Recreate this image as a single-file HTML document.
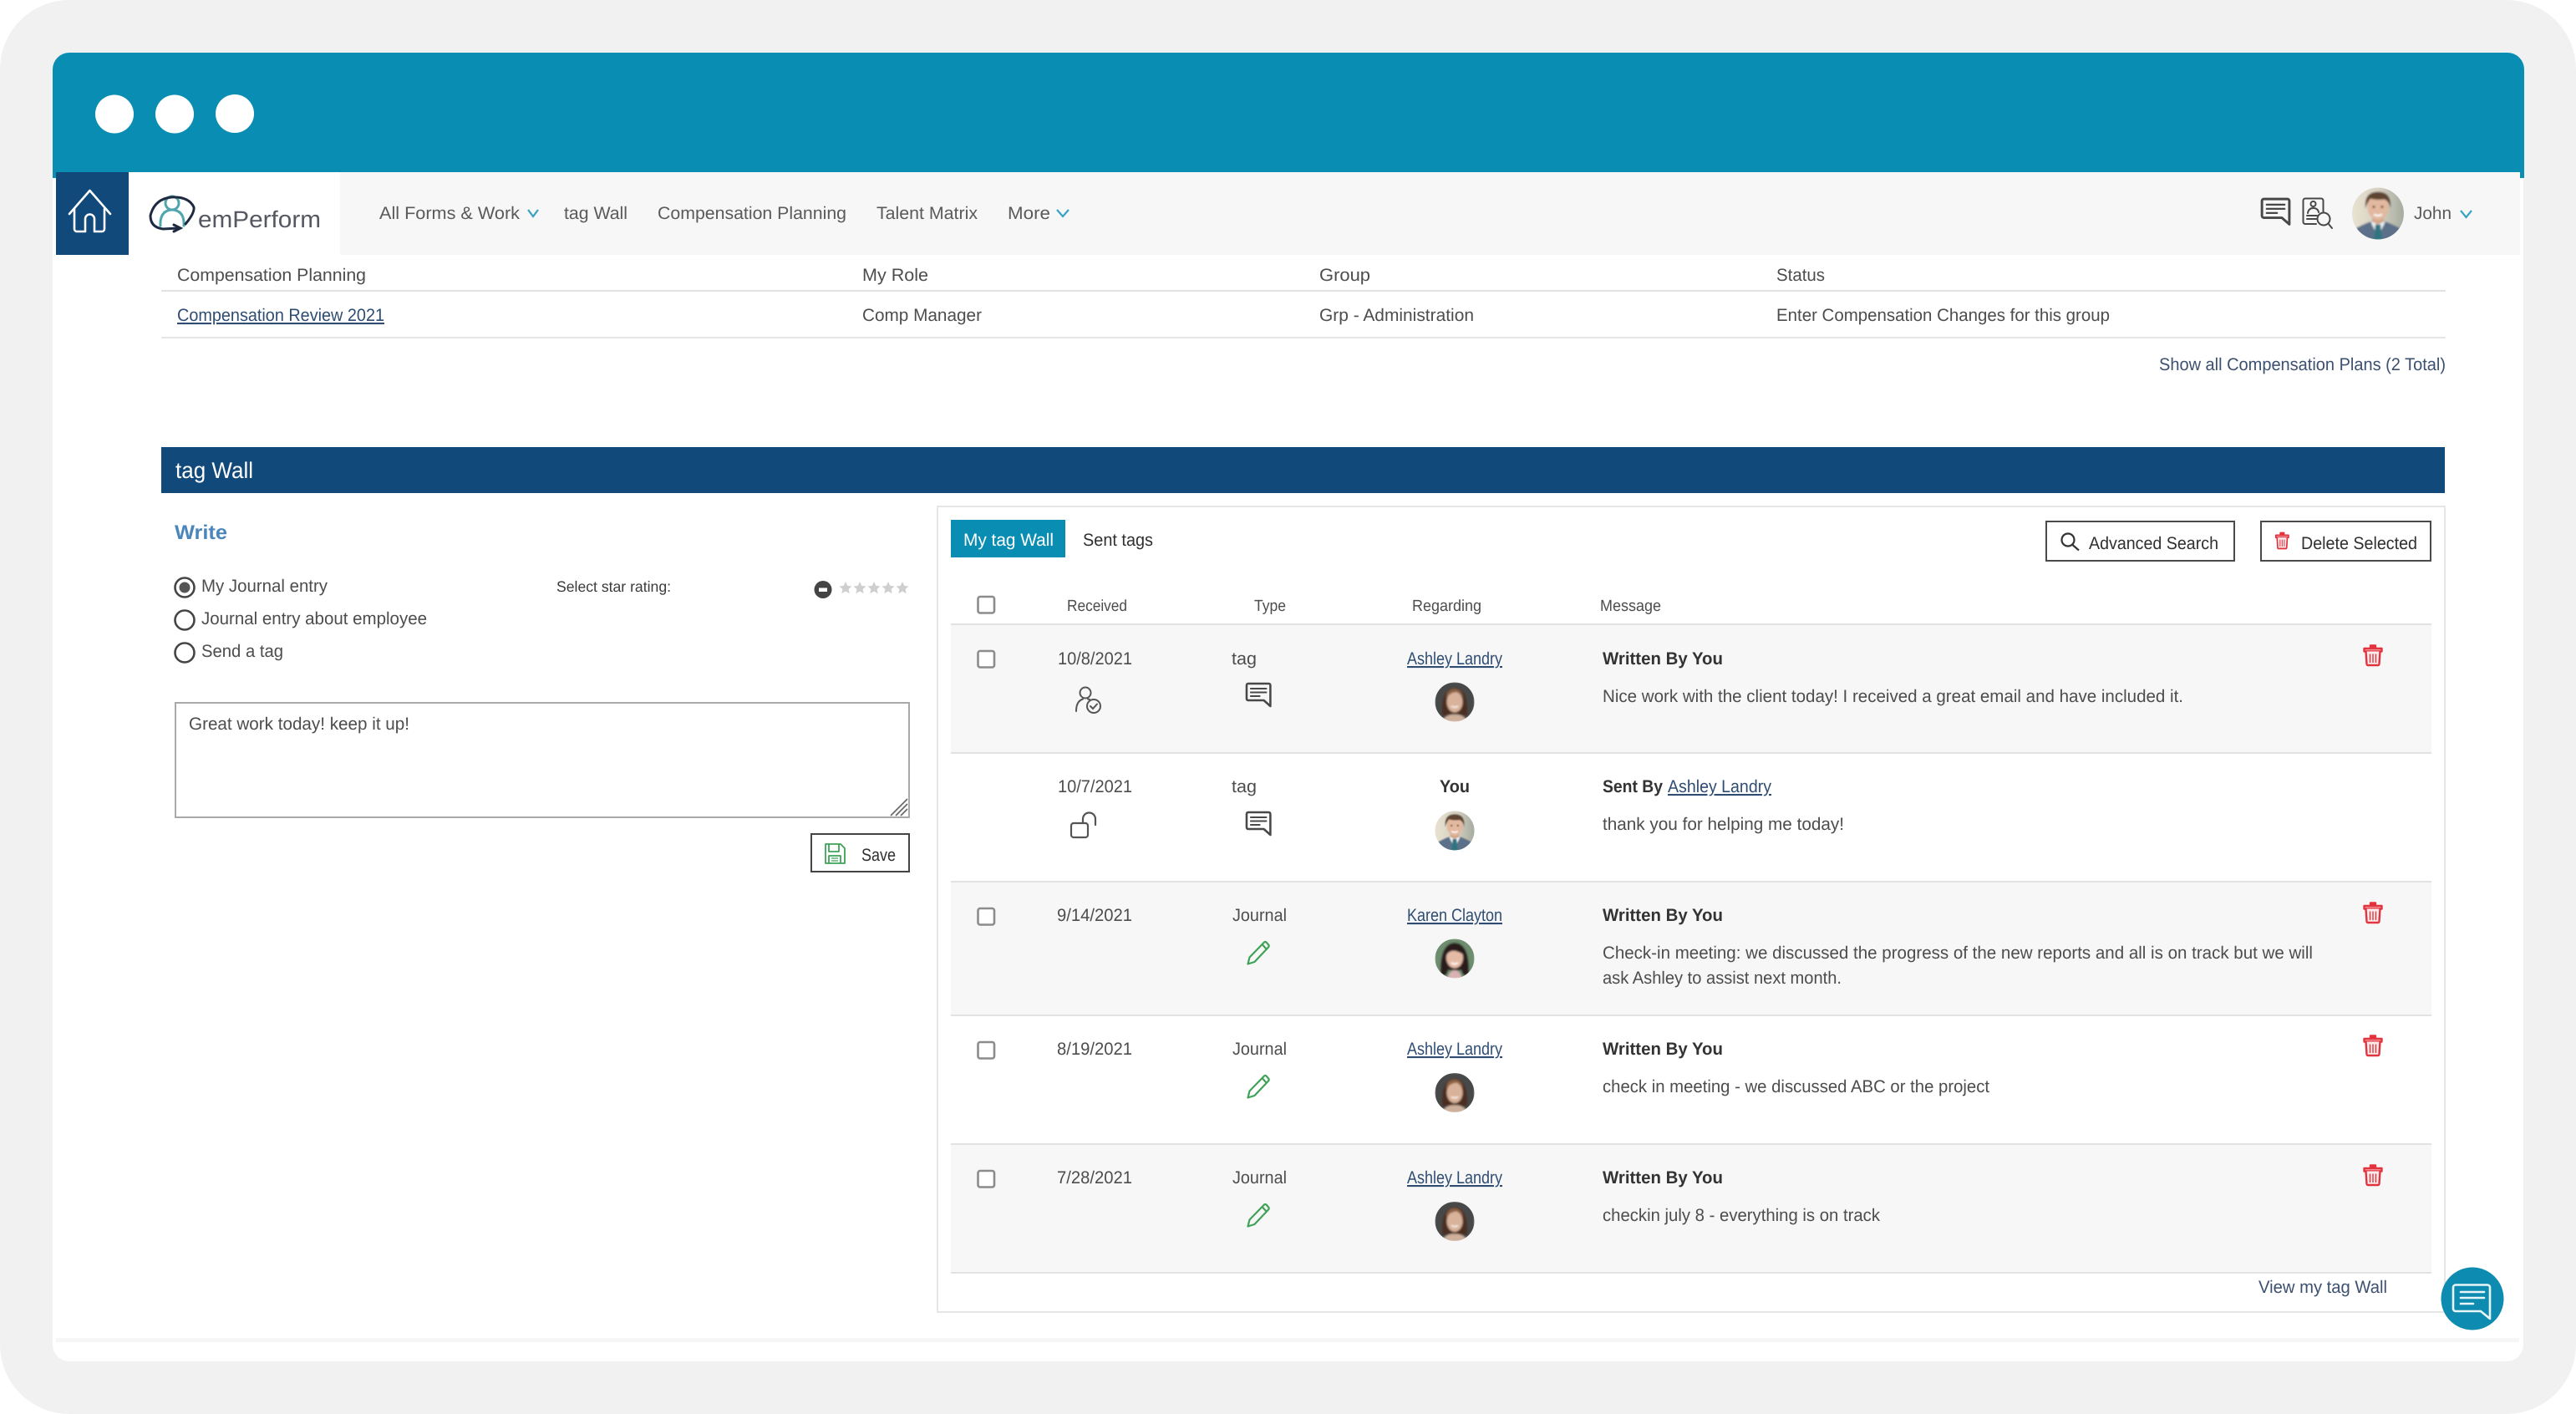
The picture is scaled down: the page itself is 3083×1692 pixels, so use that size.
<!DOCTYPE html>
<html lang="en"><head><meta charset="utf-8"><title>emPerform tag Wall</title>
<style>
html,body{margin:0;padding:0;background:#fff}
svg{display:block}
text{font-family:"Liberation Sans",Arial,sans-serif;font-size:21px;fill:#4d4d4d;text-rendering:geometricPrecision}
.b{font-weight:700;fill:#333}
.l{fill:#2f4d73;text-decoration:underline}
.n{fill:#3c5070}
.d{fill:#303030}
.m{fill:#5a5a5a}
</style></head><body>
<svg xmlns="http://www.w3.org/2000/svg" width="3083" height="1692" viewBox="0 0 3083 1692">
<defs>
<clipPath id="c31"><circle cx="0" cy="0" r="31"/></clipPath>
<clipPath id="c23"><circle cx="0" cy="0" r="23.5"/></clipPath>
<filter id="bl" x="-10%" y="-10%" width="120%" height="120%"><feGaussianBlur stdDeviation="1"/></filter>
<linearGradient id="mbg" x1="0" x2="1" y1="0" y2="0"><stop offset="0" stop-color="#e9e3d2"/><stop offset=".55" stop-color="#d4cfc0"/><stop offset="1" stop-color="#a3aa9e"/></linearGradient>
<g id="chat" fill="none" stroke="#484848" stroke-width="2.6" stroke-linejoin="round" stroke-linecap="round">
<path d="M3 1H28a2 2 0 0 1 2 2V28L22 21H3a2 2 0 0 1-2-2V3a2 2 0 0 1 2-2Z"/>
<path d="M6 7H25M6 11.5H25M6 16H17" stroke-width="2"/>
</g>
<g id="pencil" fill="none" stroke="#3fa257" stroke-width="2.2" stroke-linejoin="round">
<path d="M1.500 27.500L3.500 19.500L21 1.500Q22.500 .5 23.500 1.500L26.500 5Q27 6.500 26 7.500L9.500 25Z"/><path d="M18.500 4L24 10"/>
</g>
<g id="trash" fill="none" stroke="#e2343f" stroke-width="2.400" stroke-linejoin="round">
<path d="M2.500 5.500H23.500V9H2.500Z" fill="#f6b0b4"/><path d="M10 5V2H16V5" fill="#e2343f"/>
<path d="M4.500 9L5.500 24Q5.700 25.500 7 25.500H19Q20.300 25.500 20.500 24L21.500 9" fill="#fdeaea"/>
<path d="M9.500 12V22.500M13 12V22.500M16.500 12V22.500" stroke-width="1.400"/>
</g>
<g id="man" clip-path="url(#c31)">
<g filter="url(#bl)">
<rect x="-32" y="-32" width="64" height="64" fill="url(#mbg)"/>
<path d="M-31 32L-29 19Q-14 11-7 9H7Q14 11 29 19L31 32Z" fill="#5b7189"/>
<rect x="-7" y="3" width="14" height="12" fill="#d3a68a"/>
<path d="M-9 9L0 28L9 9L0 13Z" fill="#eef2f4"/><path d="M-3 13H3L5 32H-5Z" fill="#2e7480"/>
<ellipse cx="0" cy="-8" rx="12.500" ry="16" fill="#e2b89e"/>
<path d="M-15-6Q-17-26 0-26Q17-26 15-6Q13-15 8-17Q-4-16-9-18Q-13-13-15-6Z" fill="#5d4430"/>
<path d="M-5 1Q0 4 5 1" stroke="#fff" stroke-width="2" fill="none"/>
<circle cx="-5" cy="-8" r="1.400" fill="#3a2a20"/><circle cx="5" cy="-8" r="1.400" fill="#3a2a20"/>
</g></g>
<g id="ash" clip-path="url(#c23)">
<g filter="url(#bl)">
<rect x="-24" y="-24" width="48" height="48" fill="#474a49"/>
<path d="M-15 16Q-17-16 0-17Q17-16 15 16Z" fill="#4b2f24"/>
<path d="M-16 24Q-10 14 0 15Q10 14 16 24Z" fill="#cdb09c"/>
<ellipse cx="0" cy="0" rx="9.500" ry="12.500" fill="#d8b29a"/>
<path d="M-10-4Q-6-12 4-12Q9-8 10-3Q10-15 0-16Q-11-15-10-4Z" fill="#8a6044"/>
<path d="M-4 5Q0 7.500 4 5" stroke="#fff" stroke-width="1.500" fill="none"/>
</g></g>
<g id="kar" clip-path="url(#c23)">
<g filter="url(#bl)">
<rect x="-24" y="-24" width="48" height="48" fill="#6d8d6e"/>
<path d="M-17 18Q-18-18 0-19Q18-18 17 18Q10 24 8 14H-8Q-10 24-17 18Z" fill="#2a1a1a"/>
<path d="M-9 24Q-6 14 0 14Q6 14 9 24Z" fill="#d9b2b4"/>
<ellipse cx="0" cy="-1" rx="10" ry="12.500" fill="#e5bba6"/>
<path d="M-10-4Q-4-14 10-5Q9-15 0-15Q-10-15-10-4Z" fill="#2a1a1a"/>
<path d="M-4 5Q0 8 4 5" stroke="#fff" stroke-width="2" fill="none"/>
</g></g>
</defs>

<rect width="3083" height="1692" fill="#fff"/>
<rect width="3083" height="1692" rx="83" fill="#f1f1f1"/>
<rect x="63" y="63" width="2957" height="1566" rx="20" fill="#fff"/>
<path d="M63 213V83a20 20 0 0 1 20-20H3001a20 20 0 0 1 20 20V213H3016V206H67V213Z" fill="#0a8db3"/>
<circle cx="137" cy="136.500" r="23" fill="#fff"/><circle cx="209" cy="136.500" r="23" fill="#fff"/><circle cx="281" cy="136" r="23" fill="#fff"/>

<rect x="407" y="206" width="2609" height="99" fill="#f7f7f7"/>
<rect x="67" y="206" width="87" height="99" fill="#114a7a"/>
<g fill="none" stroke="#fff" stroke-width="2.600" stroke-linejoin="round" stroke-linecap="round">
<path d="M83 256L107.500 228L132 256"/>
<path d="M89 250V274a3 3 0 0 0 3 3H102V262a5.500 5.500 0 0 1 11 0V277H122a3 3 0 0 0 3-3V250"/>
</g>
<g fill="none" stroke-linecap="round">
<circle cx="206" cy="243" r="8" stroke="#4fa6ac" stroke-width="3"/>
<path d="M192 270Q191 252 206 251Q221 252 220 270" stroke="#4fa6ac" stroke-width="3"/>
<path d="M222 268Q233 255 232 248Q226 235 205 236Q185 238 180 258Q180 272 195 274L214 273" stroke="#1e2a40" stroke-width="3"/>
<path d="M208 269L216 273L208 277" stroke="#1e2a40" stroke-width="3"/>
</g>
<text x="237" y="272" style="font-size:28px;fill:#555860" textLength="147" lengthAdjust="spacingAndGlyphs">emPerform</text>

<text class="m" x="454" y="262" textLength="168" lengthAdjust="spacingAndGlyphs">All Forms &amp; Work</text>
<path d="M632 251L638 259L644 251" fill="none" stroke="#37a3c0" stroke-width="2.200"/>
<text class="m" x="675" y="262" textLength="76" lengthAdjust="spacingAndGlyphs">tag Wall</text>
<text class="m" x="787" y="262" textLength="226" lengthAdjust="spacingAndGlyphs">Compensation Planning</text>
<text class="m" x="1049" y="262" textLength="121" lengthAdjust="spacingAndGlyphs">Talent Matrix</text>
<text class="m" x="1206" y="262" textLength="51" lengthAdjust="spacingAndGlyphs">More</text>
<path d="M1265 251L1272 259L1279 251" fill="none" stroke="#37a3c0" stroke-width="2.200"/>

<use href="#chat" transform="translate(2706 237) scale(1.13 1.12)"/>
<g fill="none" stroke="#484848" stroke-width="2" stroke-linecap="round" stroke-linejoin="round">
<path d="M2772 268H2759a2.500 2.500 0 0 1-2.500-2.500V240a2.500 2.500 0 0 1 2.500-2.500H2778a2.500 2.500 0 0 1 2.500 2.500V254"/>
<circle cx="2768.500" cy="244" r="3"/>
<path d="M2762 255Q2763 249 2768.500 249Q2774 249 2775 254"/>
<path d="M2761 258H2773M2761 262H2772" />
<circle cx="2781" cy="262" r="7.500"/><path d="M2786.500 267.500L2791 273"/>
</g>
<use href="#man" transform="translate(2846 255.500)"/>
<text class="m" x="2889" y="262" textLength="45" lengthAdjust="spacingAndGlyphs">John</text>
<path d="M2945 252L2951.500 260L2958 252" fill="none" stroke="#37a3c0" stroke-width="2.200"/>

<text x="212" y="336" textLength="226" lengthAdjust="spacingAndGlyphs">Compensation Planning</text>
<text x="1032" y="336" textLength="79" lengthAdjust="spacingAndGlyphs">My Role</text>
<text x="1579" y="336" textLength="61" lengthAdjust="spacingAndGlyphs">Group</text>
<text x="2126" y="336" textLength="58" lengthAdjust="spacingAndGlyphs">Status</text>
<rect x="193" y="347" width="2734" height="2" fill="#e2e2e2"/>
<text class="l" x="212" y="384" textLength="248" lengthAdjust="spacingAndGlyphs">Compensation Review 2021</text>
<text x="1032" y="384" textLength="143" lengthAdjust="spacingAndGlyphs">Comp Manager</text>
<text x="1579" y="384" textLength="185" lengthAdjust="spacingAndGlyphs">Grp - Administration</text>
<text x="2126" y="384" textLength="399" lengthAdjust="spacingAndGlyphs">Enter Compensation Changes for this group</text>
<rect x="193" y="403" width="2734" height="2" fill="#e6e6e6"/>
<text class="n" x="2584" y="443" textLength="343" lengthAdjust="spacingAndGlyphs">Show all Compensation Plans (2 Total)</text>

<rect x="193" y="535" width="2733" height="55" fill="#114a7a"/>
<text x="210" y="572" style="font-size:27px;fill:#fff" textLength="93" lengthAdjust="spacingAndGlyphs">tag Wall</text>

<text x="209" y="645" style="font-size:24px;font-weight:700;fill:#4a86ba" textLength="63" lengthAdjust="spacingAndGlyphs">Write</text>
<g fill="none" stroke="#454545" stroke-width="2.600">
<circle cx="221" cy="703" r="11.500"/><circle cx="221" cy="742" r="11.500"/><circle cx="221" cy="781" r="11.500"/>
</g>
<circle cx="221" cy="703" r="6.500" fill="#555"/>
<text x="241" y="708" textLength="151" lengthAdjust="spacingAndGlyphs">My Journal entry</text>
<text x="241" y="747" textLength="270" lengthAdjust="spacingAndGlyphs">Journal entry about employee</text>
<text x="241" y="786" textLength="98" lengthAdjust="spacingAndGlyphs">Send a tag</text>
<text x="666" y="708" style="font-size:18px;fill:#3a3a3a" textLength="137" lengthAdjust="spacingAndGlyphs">Select star rating:</text>
<circle cx="985" cy="705.500" r="10.500" fill="#444"/><rect x="980" y="703.500" width="10" height="4.500" fill="#fff"/>
<g fill="#cfcfcf">
<path d="M1012 696l2.300 4.900 5.200.6-3.900 3.500 1.100 5.200-4.700-2.700-4.700 2.700 1.100-5.200-3.900-3.500 5.200-.6z"/>
<path d="M1029 696l2.300 4.900 5.200.6-3.900 3.500 1.100 5.200-4.700-2.700-4.700 2.700 1.100-5.200-3.900-3.500 5.200-.6z"/>
<path d="M1046 696l2.300 4.900 5.200.6-3.900 3.500 1.100 5.200-4.700-2.700-4.700 2.700 1.100-5.200-3.900-3.500 5.200-.6z"/>
<path d="M1063 696l2.300 4.900 5.200.6-3.900 3.500 1.100 5.200-4.700-2.700-4.700 2.700 1.100-5.200-3.900-3.500 5.200-.6z"/>
<path d="M1080 696l2.300 4.900 5.200.6-3.900 3.500 1.100 5.200-4.700-2.700-4.700 2.700 1.100-5.200-3.900-3.500 5.200-.6z"/>
</g>
<rect x="210" y="841" width="878" height="137" fill="#fff" stroke="#a9a9a9" stroke-width="2"/>
<text x="226" y="873" textLength="264" lengthAdjust="spacingAndGlyphs">Great work today! keep it up!</text>
<path d="M1066 976L1086 956M1072 976L1086 962M1078 976L1086 968" stroke="#666" stroke-width="1.600"/>
<rect x="971" y="998" width="117" height="45" fill="#fff" stroke="#444" stroke-width="2"/>
<g fill="none" stroke="#3fa257" stroke-width="1.800" stroke-linejoin="round">
<path d="M988 1010H1006L1011 1015V1033H988Z"/><path d="M992 1010V1019H1004V1010"/><path d="M992 1033V1024H1006V1033"/><path d="M995 1027H1003M995 1030H1003" stroke-width="1.300"/>
</g>
<text class="d" x="1031" y="1030" textLength="41" lengthAdjust="spacingAndGlyphs">Save</text>

<rect x="1122" y="606" width="1804" height="964" fill="#fff" stroke="#e6e6e6" stroke-width="2"/>
<rect x="1138" y="622" width="137" height="45" fill="#0a8db3"/>
<text x="1153" y="653" style="fill:#fff" textLength="108" lengthAdjust="spacingAndGlyphs">My tag Wall</text>
<text class="d" x="1296" y="653" textLength="84" lengthAdjust="spacingAndGlyphs">Sent tags</text>
<rect x="2449" y="624" width="225" height="47" fill="#fff" stroke="#4a4a4a" stroke-width="2"/>
<g fill="none" stroke="#333" stroke-width="2.200"><circle cx="2475" cy="646" r="7.500"/><path d="M2480.500 652L2488 658.500"/></g>
<text class="d" x="2500" y="657" textLength="155" lengthAdjust="spacingAndGlyphs">Advanced Search</text>
<rect x="2706" y="624" width="203" height="47" fill="#fff" stroke="#4a4a4a" stroke-width="2"/>
<use href="#trash" transform="translate(2722 636) scale(.72 .8)"/>
<text class="d" x="2754" y="657" textLength="139" lengthAdjust="spacingAndGlyphs">Delete Selected</text>

<g>
<text x="1277" y="731" style="font-size:19px" textLength="72" lengthAdjust="spacingAndGlyphs">Received</text>
<text x="1501" y="731" style="font-size:19px" textLength="38" lengthAdjust="spacingAndGlyphs">Type</text>
<text x="1690" y="731" style="font-size:19px" textLength="83" lengthAdjust="spacingAndGlyphs">Regarding</text>
<text x="1915" y="731" style="font-size:19px" textLength="73" lengthAdjust="spacingAndGlyphs">Message</text>
</g>
<g fill="#fff" stroke="#8c8c8c" stroke-width="2.600">
<rect x="1170.500" y="714" width="19.500" height="19.500" rx="2.500"/>
</g>

<!-- rows -->
<rect x="1138" y="747" width="1772" height="154" fill="#f7f7f7"/>
<rect x="1138" y="1055" width="1772" height="160" fill="#f7f7f7"/>
<rect x="1138" y="1369" width="1772" height="154" fill="#f7f7f7"/>
<g fill="#e2e2e2">
<rect x="1138" y="746" width="1772" height="2"/><rect x="1138" y="900" width="1772" height="2"/>
<rect x="1138" y="1054" width="1772" height="2"/><rect x="1138" y="1214" width="1772" height="2"/>
<rect x="1138" y="1368" width="1772" height="2"/><rect x="1138" y="1522" width="1772" height="2"/>
</g>
<g fill="#fff" stroke="#8c8c8c" stroke-width="2.600">
<rect x="1170.500" y="779" width="19.500" height="19.500" rx="2.500"/>
<rect x="1170.500" y="1087" width="19.500" height="19.500" rx="2.500"/>
<rect x="1170.500" y="1247" width="19.500" height="19.500" rx="2.500"/>
<rect x="1170.500" y="1401" width="19.500" height="19.500" rx="2.500"/>
</g>

<!-- row 1 -->
<text x="1266" y="795" textLength="89" lengthAdjust="spacingAndGlyphs">10/8/2021</text>
<text x="1474" y="795" textLength="30" lengthAdjust="spacingAndGlyphs">tag</text>
<text class="l" x="1684" y="795" textLength="114" lengthAdjust="spacingAndGlyphs">Ashley Landry</text>
<g fill="none" stroke="#555" stroke-width="2" stroke-linecap="round">
<circle cx="1299" cy="829" r="6.500"/>
<path d="M1288 851Q1288 839 1296 836.500M1302 836.500L1304 837"/>
<circle cx="1309" cy="845" r="8"/><path d="M1305 845L1308 848L1313 842.500"/>
</g>
<use href="#chat" transform="translate(1491 817) scale(.98 1)"/>
<use href="#ash" transform="translate(1741 840)"/>
<text class="b" x="1918" y="795" textLength="144" lengthAdjust="spacingAndGlyphs">Written By You</text>
<text x="1918" y="840" textLength="695" lengthAdjust="spacingAndGlyphs">Nice work with the client today! I received a great email and have included it.</text>
<use href="#trash" transform="translate(2827 770.500)"/>

<!-- row 2 -->
<text x="1266" y="948" textLength="89" lengthAdjust="spacingAndGlyphs">10/7/2021</text>
<text x="1474" y="948" textLength="30" lengthAdjust="spacingAndGlyphs">tag</text>
<text class="b" x="1723" y="948" textLength="36" lengthAdjust="spacingAndGlyphs">You</text>
<g fill="none" stroke="#555" stroke-width="2.200" stroke-linecap="round">
<rect x="1282" y="985" width="20" height="17" rx="3"/>
<path d="M1296 985V980a7.500 7.500 0 0 1 15 0V987"/>
</g>
<use href="#chat" transform="translate(1491 971) scale(.98 1)"/>
<use href="#man" transform="translate(1741 994) scale(.76)"/>
<text class="b" x="1918" y="948" textLength="72" lengthAdjust="spacingAndGlyphs">Sent By</text>
<text class="l" x="1996" y="948" textLength="124" lengthAdjust="spacingAndGlyphs">Ashley Landry</text>
<text x="1918" y="993" textLength="289" lengthAdjust="spacingAndGlyphs">thank you for helping me today!</text>

<!-- row 3 -->
<text x="1265" y="1102" textLength="90" lengthAdjust="spacingAndGlyphs">9/14/2021</text>
<text x="1475" y="1102" textLength="65" lengthAdjust="spacingAndGlyphs">Journal</text>
<text class="l" x="1684" y="1102" textLength="114" lengthAdjust="spacingAndGlyphs">Karen Clayton</text>
<use href="#pencil" transform="translate(1492 1126)"/>
<use href="#kar" transform="translate(1741 1147)"/>
<text class="b" x="1918" y="1102" textLength="144" lengthAdjust="spacingAndGlyphs">Written By You</text>
<text x="1918" y="1147" textLength="850" lengthAdjust="spacingAndGlyphs">Check-in meeting: we discussed the progress of the new reports and all is on track but we will</text>
<text x="1918" y="1177" textLength="286" lengthAdjust="spacingAndGlyphs">ask Ashley to assist next month.</text>
<use href="#trash" transform="translate(2827 1078.500)"/>

<!-- row 4 -->
<text x="1265" y="1262" textLength="90" lengthAdjust="spacingAndGlyphs">8/19/2021</text>
<text x="1475" y="1262" textLength="65" lengthAdjust="spacingAndGlyphs">Journal</text>
<text class="l" x="1684" y="1262" textLength="114" lengthAdjust="spacingAndGlyphs">Ashley Landry</text>
<use href="#pencil" transform="translate(1492 1286)"/>
<use href="#ash" transform="translate(1741 1307.500)"/>
<text class="b" x="1918" y="1262" textLength="144" lengthAdjust="spacingAndGlyphs">Written By You</text>
<text x="1918" y="1307" textLength="463" lengthAdjust="spacingAndGlyphs">check in meeting - we discussed ABC or the project</text>
<use href="#trash" transform="translate(2827 1237.500)"/>

<!-- row 5 -->
<text x="1265" y="1416" textLength="90" lengthAdjust="spacingAndGlyphs">7/28/2021</text>
<text x="1475" y="1416" textLength="65" lengthAdjust="spacingAndGlyphs">Journal</text>
<text class="l" x="1684" y="1416" textLength="114" lengthAdjust="spacingAndGlyphs">Ashley Landry</text>
<use href="#pencil" transform="translate(1492 1440)"/>
<use href="#ash" transform="translate(1741 1461.500)"/>
<text class="b" x="1918" y="1416" textLength="144" lengthAdjust="spacingAndGlyphs">Written By You</text>
<text x="1918" y="1461" textLength="332" lengthAdjust="spacingAndGlyphs">checkin july 8 - everything is on track</text>
<use href="#trash" transform="translate(2827 1392.500)"/>

<text class="n" x="2703" y="1547" textLength="154" lengthAdjust="spacingAndGlyphs">View my tag Wall</text>

<rect x="67" y="1601" width="2948" height="5" fill="#f6f6f6"/>
<circle cx="2959" cy="1554" r="37.500" fill="#0e8bb0"/>
<g fill="none" stroke="#e8f5f9" stroke-width="2.600" stroke-linejoin="round" stroke-linecap="round">
<path d="M2939 1537.500H2977a3 3 0 0 1 3 3V1578L2969 1569H2939a3 3 0 0 1-3-3V1540.500a3 3 0 0 1 3-3Z"/>
<path d="M2945 1546H2973M2945 1553H2973M2945 1560H2960"/>
</g>
</svg>
</body></html>
